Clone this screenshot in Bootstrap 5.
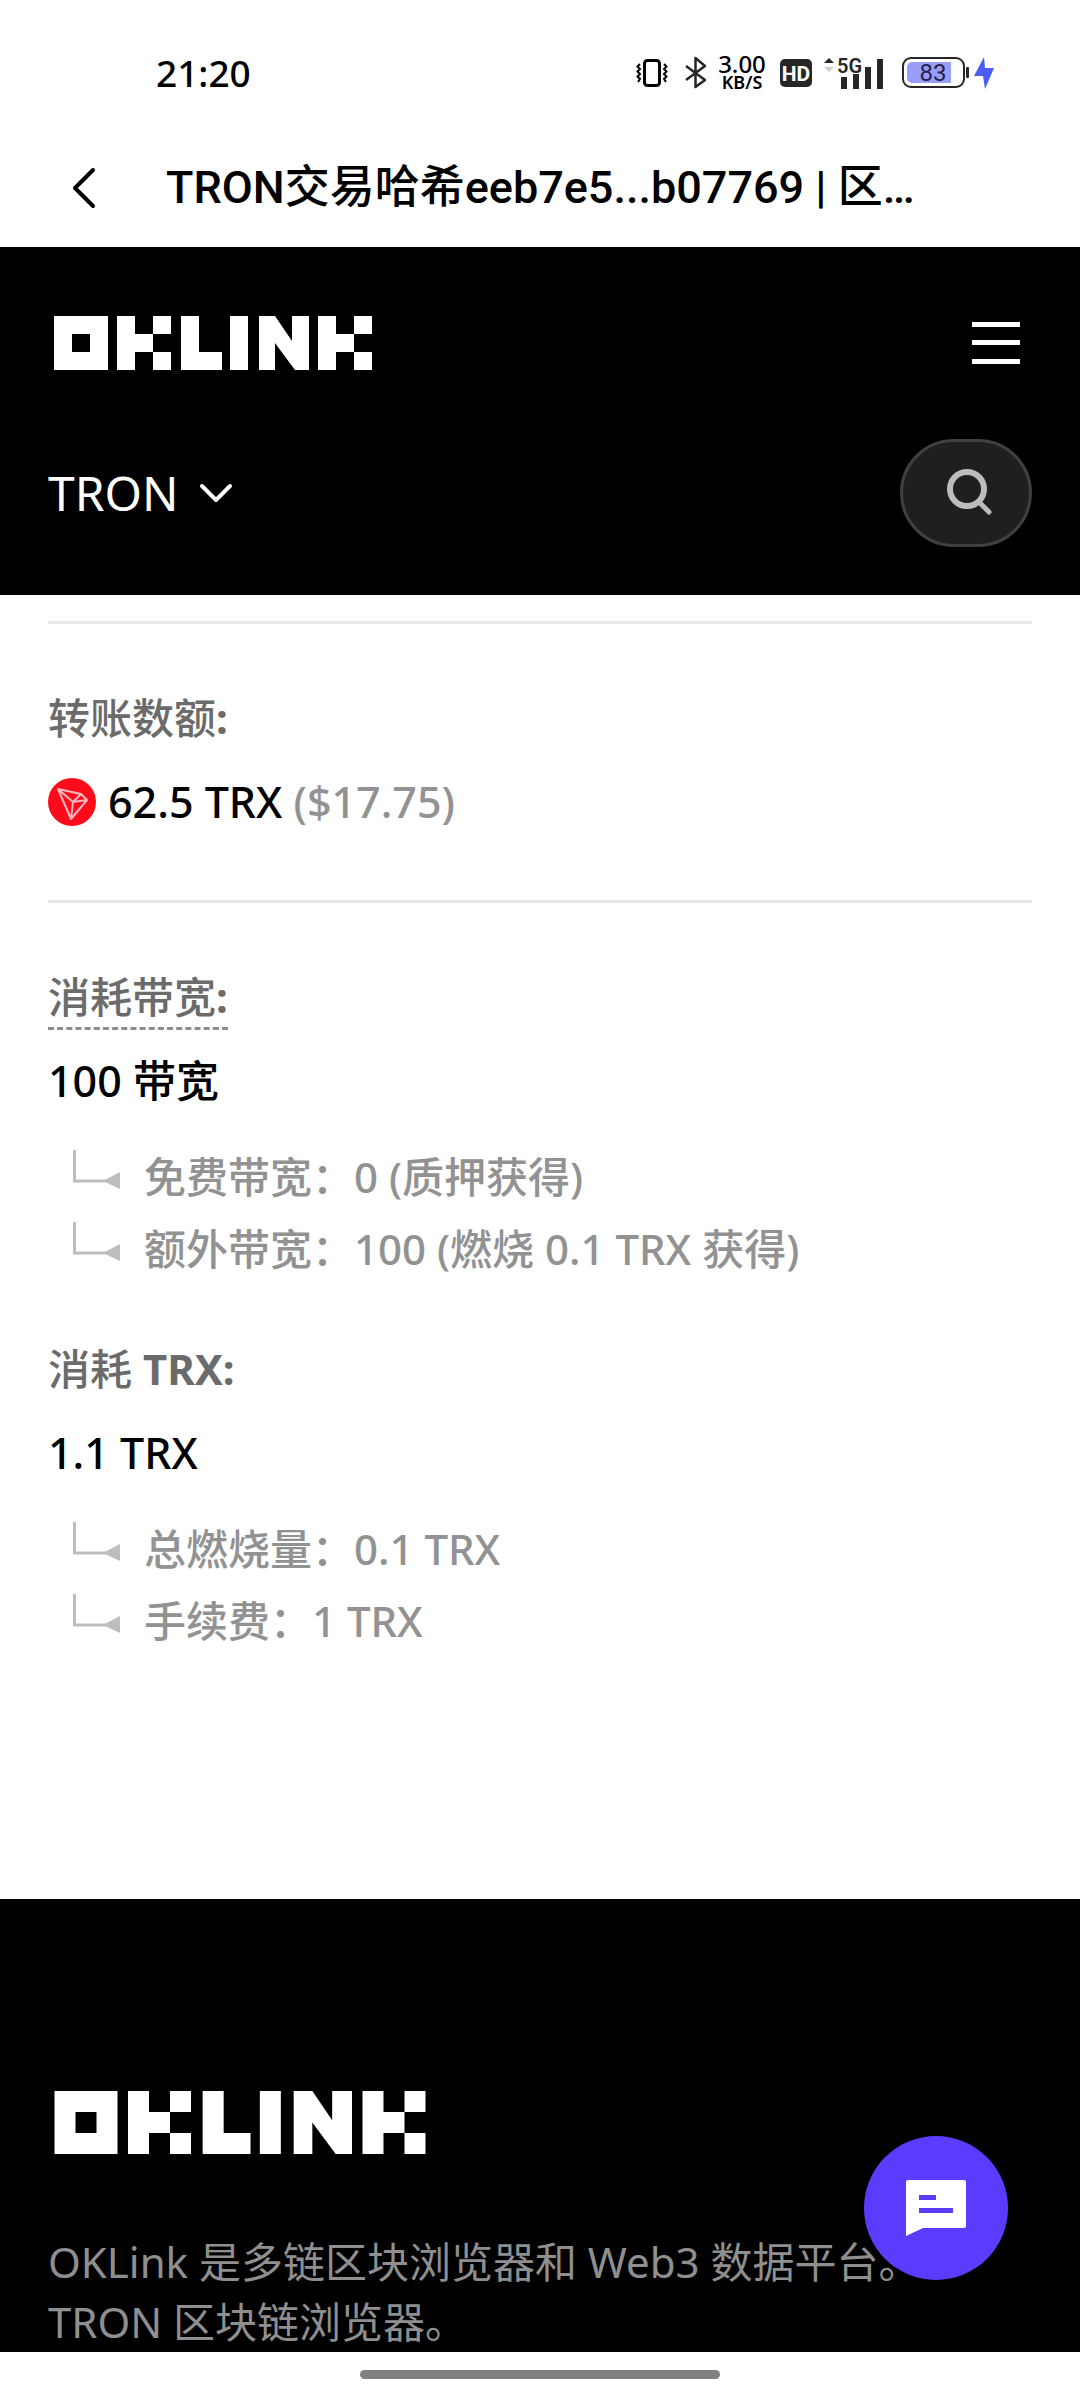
<!DOCTYPE html>
<html lang="zh-CN">
<head>
<meta charset="utf-8">
<meta name="viewport" content="width=device-width, initial-scale=1">
<title>TRON交易哈希 | 区块链浏览器</title>
<link href="https://cdn.jsdelivr.net/npm/bootstrap@5.3.0/dist/css/bootstrap.min.css" rel="stylesheet">
<style>
  body { font-family: "Noto Sans", "Noto Sans CJK SC", sans-serif; font-size: 42px; line-height: 60px; color: #000; background: #fff; }
  svg { display: block; flex: none; }
  .status-bar { height: 127px; padding: 18px 86px 0 156px; font-weight: 500; font-size: 37px; line-height: 36px; }
  .net-speed { font-size: 24px; line-height: 20px; width: 52px; }
  .net-speed small { font-size: 18px; line-height: 17px; font-weight: 600; }
  .title-bar { height: 120px; padding: 2px 72px 0; gap: 70px; }
  .title-bar h1 { font-family: Roboto, "Noto Sans CJK SC", sans-serif; font-size: 45px; line-height: 60px; font-weight: 500; }
  .site-header { background: #000; padding: 60px 48px 48px; }
  .site-header .top-row { height: 72px; padding: 0 12px 0 6px; }
  .chain-row { margin-top: 60px; }
  .chain-btn { font-size: 48px; line-height: 60px; gap: 20px; }
  .search-btn { width: 132px; height: 108px; border: 3px solid #404040; background: #1f1f1f; }
  .details { padding: 26px 48px 248px; }
  .detail-block { border-top: 3px solid #e8e8e8; padding: 64px 0 68px; font-weight: 500; }
  .detail-block:last-child { padding-bottom: 0; }
  .detail-block dt { color: #6b6b6b; font-weight: 700; }
  .zh { font-weight: 500; }
  .hint { display: inline-block; border-bottom: 3px dashed #8c8c8c; margin-bottom: -3px; }
  .detail-value { margin: 24px 0 0; font-size: 43px; }
  .usd, .breakdown { color: #929292; }
  .breakdown { margin: 36px 0 0; padding-left: 25px; gap: 12px; font-size: 42px; }
  .breakdown li { gap: 23px; }
  .breakdown svg { margin-top: 3px; }
  .next-item { margin-top: 60px; }
  .site-footer { background: #000; color: #8f8f8f; padding: 192px 48px 0; }
  .site-footer .footer-logo { margin: 0 0 78px 6px; }
  .chat-btn { width: 144px; height: 144px; right: 72px; bottom: 120px; background: #5a3cff; }
  .home-area { height: 48px; padding-top: 18px; }
  .home-pill { width: 33.3333%; height: 9px; background: #808080; }
</style>
<script src="https://cdn.jsdelivr.net/npm/bootstrap@5.3.0/dist/js/bootstrap.bundle.min.js"></script>
</head>
<body>
<svg width="0" height="0" class="d-none" aria-hidden="true">
  <symbol id="brand" viewBox="0 0 318 54">
    <path fill="#fff" fill-rule="evenodd" d="M0 0H54V54H0ZM18 18V36H36V18ZM63 0H81V18H99V36H81V54H63ZM99 0H117V18H99ZM99 36H117V54H99ZM127 0H145V36H168V54H127ZM176 0H194V54H176ZM205 0H221L238 25V0H255V54H241L221 27V54H205ZM264 0H282V18H300V36H282V54H264ZM300 0H318V18H300ZM300 36H318V54H300Z"/>
  </symbol>
  <symbol id="branch" viewBox="0 0 48 42">
    <path d="M1.500 0V31H36" fill="none" stroke="#bdbdbd" stroke-width="3"/><path d="M30 31L47 22V39Z" fill="#bdbdbd"/>
  </symbol>
</svg>

<div class="status-bar d-flex align-items-center justify-content-between">
  <time>21:20</time>
  <div class="d-flex align-items-center">
    <svg width="32" height="32" viewBox="0 0 32 32" fill="none" stroke="#000" stroke-width="2"><rect x="8.500" y="3.500" width="15" height="25" rx="3" stroke-width="3"/><path d="M4 7L1.500 9.500L4 12L1.500 14.500L4 17L1.500 19.500L4 22L2 25M28 7L30.500 9.500L28 12L30.500 14.500L28 17L30.500 19.500L28 22L30 25"/></svg>
    <svg class="ms-3" width="24" height="36" viewBox="0 0 24 36" fill="none" stroke="#262626" stroke-width="2.500" stroke-linejoin="round"><path d="M2 11L21 25L11.500 32V3L21 11L2 25"/></svg>
    <div class="net-speed d-flex flex-column align-items-center ms-2 me-2"><span>3.00</span><small>KB/S</small></div>
    <svg class="ms-1" width="32" height="28" viewBox="0 0 32 28"><rect width="32" height="28" rx="5" fill="#262626"/><text x="16" y="22" text-anchor="middle" font-family="Roboto, sans-serif" font-size="21" font-weight="700" fill="#fff">HD</text></svg>
    <svg class="ms-2" width="66" height="36" viewBox="0 0 66 36"><path d="M4 8L9 3L14 8Z" fill="#262626"/><path d="M4 12H14L9 17Z" fill="#ccc"/><text x="17" y="18" font-family="Roboto, sans-serif" font-size="20" font-weight="600" fill="#262626">5G</text><path fill="#262626" d="M21 22h6v12h-6ZM33 19h6v15h-6ZM45 12h6v22h-6ZM57 4h6v30h-6Z"/></svg>
    <svg class="ms-3" width="68" height="34" viewBox="0 0 68 34"><rect x="1" y="2" width="61" height="29" rx="8" fill="#fff" stroke="#262626" stroke-width="2"/><path d="M10 6H49V27H10A5 5 0 0 1 5 22V11A5 5 0 0 1 10 6Z" fill="#989df8"/><rect x="64" y="11" width="3" height="11" rx="1" fill="#262626"/><text x="31" y="25" text-anchor="middle" font-family="Roboto, sans-serif" font-size="24" font-weight="400" fill="#22224a">83</text></svg>
    <svg class="ms-1" width="20" height="34" viewBox="0 0 20 34"><path d="M10 1L0 20H9L11 33L20 12H11Z" fill="#4b5cf7"/></svg>
  </div>
</div>

<nav class="title-bar d-flex align-items-center" aria-label="页面标题">
  <button type="button" class="btn p-0 border-0" aria-label="返回"><svg width="24" height="42" viewBox="0 0 24 42" fill="none" stroke="#000" stroke-width="4" stroke-linecap="round" stroke-linejoin="round"><path d="M21 3L3 21L21 39"/></svg></button>
  <h1 class="m-0 text-nowrap">TRON交易哈希eeb7e5...b07769 | 区…</h1>
</nav>

<header class="site-header">
  <div class="top-row d-flex align-items-center justify-content-between">
    <a href="#" aria-label="OKLINK"><svg width="318" height="54"><use href="#brand"/></svg></a>
    <button type="button" class="btn p-0 border-0" aria-label="菜单"><svg width="48" height="42" viewBox="0 0 48 42" fill="#fff"><rect width="48" height="5"/><rect y="18" width="48" height="5"/><rect y="37" width="48" height="5"/></svg></button>
  </div>
  <div class="d-flex align-items-center justify-content-between chain-row">
    <button type="button" class="chain-btn btn p-0 border-0 text-white d-flex align-items-center">TRON<svg width="34" height="22" viewBox="0 0 34 22" fill="none" stroke="#fff" stroke-width="4" stroke-linecap="round" stroke-linejoin="round"><path d="M3 4L17 18L31 4"/></svg></button>
    <button type="button" class="search-btn btn rounded-pill p-0 d-flex align-items-center justify-content-center" aria-label="搜索"><svg width="54" height="54" viewBox="0 0 54 54" fill="none" stroke="#bcbcbc" stroke-width="6" stroke-linecap="round"><circle cx="28" cy="23" r="17"/><path d="M41 37L50 46" stroke-width="5"/></svg></button>
  </div>
</header>

<main class="details">
  <dl class="detail-block m-0">
    <dt><span class="zh">转账数额</span>:</dt>
    <dd class="detail-value d-flex align-items-center">
      <svg class="me-2" width="48" height="48" viewBox="0 0 48 48"><circle cx="24" cy="24" r="24" fill="#ff0a1b"/><path d="M10 11L33 16L39 22L23 41ZM10 11L25 24L23 41M25 24L39 22M25 24L33 16" fill="none" stroke="#ffb9be" stroke-width="2" stroke-linejoin="round"/></svg>
      <span class="ms-1">62.5 TRX <span class="usd">($17.75)</span></span>
    </dd>
  </dl>
  <dl class="detail-block m-0">
    <dt class="d-flex"><span class="hint"><span class="zh">消耗带宽</span>:</span></dt>
    <dd class="detail-value">100 带宽
      <ul class="breakdown list-unstyled d-flex flex-column">
        <li class="d-flex"><svg width="48" height="42"><use href="#branch"/></svg><span>免费带宽：0 (质押获得)</span></li>
        <li class="d-flex"><svg width="48" height="42"><use href="#branch"/></svg><span>额外带宽：100 (燃烧 0.1 TRX 获得)</span></li>
      </ul>
    </dd>
    <dt class="next-item"><span class="zh">消耗</span> TRX:</dt>
    <dd class="detail-value">1.1 TRX
      <ul class="breakdown list-unstyled d-flex flex-column">
        <li class="d-flex"><svg width="48" height="42"><use href="#branch"/></svg><span>总燃烧量：0.1 TRX</span></li>
        <li class="d-flex"><svg width="48" height="42"><use href="#branch"/></svg><span>手续费：1 TRX</span></li>
      </ul>
    </dd>
  </dl>
</main>

<footer class="site-footer">
  <svg class="footer-logo" width="372" height="63" role="img" aria-label="OKLINK"><use href="#brand"/></svg>
  <p class="m-0">OKLink 是多链区块浏览器和 Web3 数据平台。<br>TRON 区块链浏览器。</p>
</footer>
<div class="home-area bg-white d-flex justify-content-center"><div class="home-pill rounded-pill"></div></div>

<button type="button" class="chat-btn btn rounded-circle border-0 p-0 position-fixed d-flex align-items-center justify-content-center" aria-label="在线客服"><svg width="60" height="56" viewBox="0 0 60 56"><path fill="#fff" fill-rule="evenodd" d="M2 0H58Q60 0 60 2V46Q60 48 58 48H17L0 56V2Q0 0 2 0ZM13 15V20H30V15ZM13 28V33H47V28Z"/></svg></button>
</body>
</html>
